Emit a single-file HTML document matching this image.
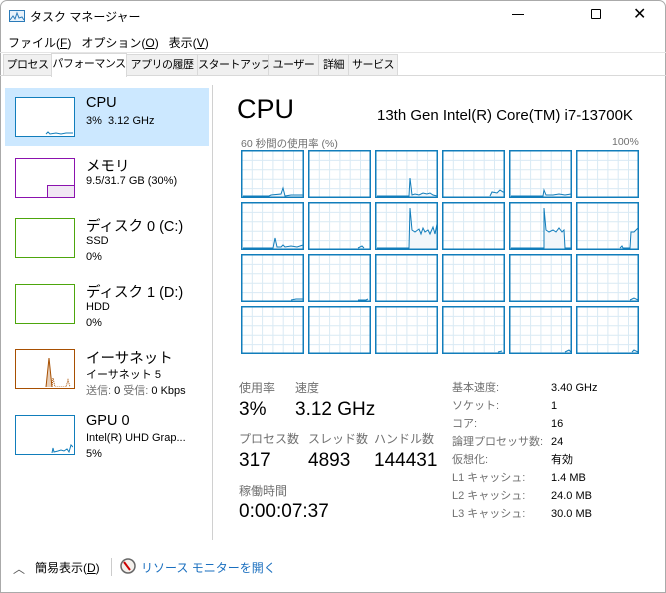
<!DOCTYPE html>
<html><head><meta charset="utf-8"><style>
*{margin:0;padding:0;box-sizing:border-box}
body{width:666px;height:593px;background:#fff;font-family:"Liberation Sans","Noto Sans CJK JP",sans-serif;color:#000;position:relative;overflow:hidden}
.a{position:absolute;white-space:nowrap}
.win{position:absolute;left:0;top:0;width:666px;height:593px;border:1px solid #aaa;border-radius:7px 7px 0 0;}
.tab{position:absolute;top:54px;height:22px;font-size:11px;line-height:21px;text-align:center;border:1px solid #d9d9d9;background:#f0f0f0;color:#000;white-space:nowrap;overflow:hidden;letter-spacing:-0.5px}
.th{position:absolute;left:15px;width:60px;height:40px;border:1.5px solid}
.t1{font-size:14.5px;left:86px}
.t2{font-size:11px;left:86px}
.g{color:#707070}
.lbl{font-size:12px;color:#707070}
.big{font-size:19px}
.r{font-size:11px}
</style></head><body>
<div class="win"></div>
<svg class="a" style="left:9px;top:10px" width="16" height="12"><rect x="0.5" y="0.5" width="15" height="11" fill="#e8f2fb" stroke="#2a7ab8"/><polyline points="1,10 4,6 6,9 8,3 10,8 13,7 15,10" fill="none" stroke="#2a7ab8"/></svg>
<div class="a" style="left:30px;top:8px;font-size:12px">タスク マネージャー</div>
<div class="a" style="left:512px;top:14px;width:12px;border-top:1px solid #000"></div>
<div class="a" style="left:591px;top:9px;width:10px;height:10px;border:1px solid #000;border-radius:1px"></div>
<div class="a" style="left:633px;top:4px;font-size:16px">✕</div>
<div class="a" style="left:8px;top:34px;font-size:12px">ファイル(<u>F</u>)&nbsp;&nbsp;&nbsp;オプション(<u>O</u>)&nbsp;&nbsp;&nbsp;表示(<u>V</u>)</div>
<div class="a" style="left:0;top:52px;width:666px;border-top:1px solid #e5e5e5"></div>
<div class="a" style="left:0;top:75px;width:666px;border-top:1px solid #d9d9d9"></div>
<div class="tab" style="left:3px;width:49px">プロセス</div>
<div class="tab" style="left:51px;width:76px;background:#fff;top:53px;height:24px;border-bottom:none">パフォーマンス</div>
<div class="tab" style="left:126px;width:72px">アプリの履歴</div>
<div class="tab" style="left:197px;width:72px">スタートアップ</div>
<div class="tab" style="left:268px;width:51px">ユーザー</div>
<div class="tab" style="left:318px;width:31px">詳細</div>
<div class="tab" style="left:348px;width:50px">サービス</div>

<div class="a" style="left:5px;top:88px;width:204px;height:58px;background:#cce8ff"></div>
<div class="a" style="left:212px;top:85px;height:455px;border-left:1px solid #d0d0d0"></div>

<div class="th" style="top:97px;border-color:#117dbb;background:#fff"><svg width="57" height="37" style="position:absolute;left:0;top:0"><polyline points="30,36 32,34 34,36 40,35 45,36 50,35 57,35" fill="none" stroke="#117dbb"/></svg></div>
<div class="a t1" style="top:95px">CPU</div><div class="a t2" style="top:115px">3%&nbsp; 3.12 GHz</div>

<div class="th" style="top:158px;border-color:#8b12ae"><div style="position:absolute;left:31px;top:26px;width:27px;height:12px;background:#f1e8f4;border-top:1.5px solid #8b12ae;border-left:1.5px solid #8b12ae"></div></div>
<div class="a t1" style="top:155px">メモリ</div><div class="a t2" style="top:175px">9.5/31.7 GB (30%)</div>

<div class="th" style="top:218px;border-color:#4da60c"></div>
<div class="a t1" style="top:215px">ディスク 0 (C:)</div><div class="a t2" style="top:235px">SSD</div><div class="a t2" style="top:251px">0%</div>

<div class="th" style="top:284px;border-color:#4da60c"></div>
<div class="a t1" style="top:281px">ディスク 1 (D:)</div><div class="a t2" style="top:301px">HDD</div><div class="a t2" style="top:317px">0%</div>

<div class="th" style="top:349px;border-color:#a74f01"><svg width="57" height="37" style="position:absolute;left:0;top:0"><polyline points="30,37 33,8 36,37" fill="#e8cfb8" stroke="#a74f01"/><polyline points="36,37 37,28 39,37 50,37 52,30 54,37" fill="none" stroke="#a74f01" stroke-dasharray="1,1"/></svg></div>
<div class="a t1" style="top:347px">イーサネット</div><div class="a t2" style="top:366px">イーサネット 5</div><div class="a t2" style="top:382px"><span class="g">送信:</span> 0 <span class="g">受信:</span> 0 Kbps</div>

<div class="th" style="top:415px;border-color:#117dbb"><svg width="57" height="37" style="position:absolute;left:0;top:0"><polyline points="36,37 37,32 38,36 42,35 45,34 48,35 51,33 53,36 55,29 57,31" fill="none" stroke="#117dbb"/></svg></div>
<div class="a t1" style="top:413px">GPU 0</div><div class="a t2" style="top:432px">Intel(R) UHD Grap...</div><div class="a t2" style="top:448px">5%</div>

<div class="a" style="left:237px;top:94px;font-size:27px">CPU</div>
<div class="a" style="left:377px;top:107px;font-size:15px">13th Gen Intel(R) Core(TM) i7-13700K</div>
<div class="a lbl" style="left:241px;top:136px;font-size:10.5px">60 秒間の使用率 (%)</div>
<div class="a lbl" style="left:612px;top:136px;font-size:10.5px">100%</div>
<div id="grid"></div>

<div class="a lbl" style="left:239px;top:379px">使用率</div>
<div class="a lbl" style="left:295px;top:379px">速度</div>
<div class="a big" style="left:239px;top:399px">3%</div>
<div class="a big" style="left:295px;top:399px">3.12 GHz</div>
<div class="a lbl" style="left:239px;top:430px">プロセス数</div>
<div class="a lbl" style="left:308px;top:430px">スレッド数</div>
<div class="a lbl" style="left:374px;top:430px">ハンドル数</div>
<div class="a big" style="left:239px;top:450px">317</div>
<div class="a big" style="left:308px;top:450px">4893</div>
<div class="a big" style="left:374px;top:450px">144431</div>
<div class="a lbl" style="left:239px;top:482px">稼働時間</div>
<div class="a big" style="left:239px;top:501px">0:00:07:37</div>

<div class="a r g" style="left:452px;top:379px;line-height:18px">基本速度:<br>ソケット:<br>コア:<br>論理プロセッサ数:<br>仮想化:<br>L1 キャッシュ:<br>L2 キャッシュ:<br>L3 キャッシュ:</div>
<div class="a r" style="left:551px;top:379px;line-height:18px">3.40 GHz<br>1<br>16<br>24<br>有効<br>1.4 MB<br>24.0 MB<br>30.0 MB</div>

<div class="a" style="left:13px;top:560px;font-size:12px;color:#555">︿</div>
<div class="a" style="left:35px;top:559px;font-size:12px">簡易表示(<u>D</u>)</div>
<div class="a" style="left:111px;top:558px;height:18px;border-left:1px solid #ccc"></div>
<svg class="a" style="left:120px;top:558px" width="16" height="16"><circle cx="8" cy="8" r="7" fill="#f4f0ec" stroke="#666" stroke-width="1.5"/><line x1="4" y1="4" x2="10" y2="12" stroke="#c00" stroke-width="2"/></svg>
<div class="a" style="left:141px;top:559px;font-size:12px;color:#1a6fbf">リソース モニターを開く</div>

<script>
var xs=[241,308,375,442,509,576],ys=[150,202,254,306];
var lines={
"0,0":"2,46 28,46 30,45 40,44 42,38 44,46 50,45 58,45 62,45",
"0,2":"2,46 34,46 35,28 37,45 40,44 44,45 48,43 52,44 55,43 58,45 62,46",
"0,3":"48,46 50,42 55,43 58,40 61,42 62,42",
"0,4":"2,46 34,46 35,40 37,45 44,45 50,44 56,45 62,44",
"1,0":"2,46 32,46 34,36 36,45 40,45 42,43 44,45 50,44 56,45 62,43",
"1,1":"50,46 54,44 56,46",
"1,2":"2,46 34,46 35,6 37,28 40,30 44,27 46,32 48,26 50,30 53,28 55,32 58,25 60,32 62,22",
"1,4":"2,46 35,46 35,6 37,28 40,30 44,28 47,30 50,26 53,30 55,28 56,46 62,46",
"1,5":"44,46 46,44 47,46 54,46 55,30 58,30 60,28 62,26",
"2,0":"50,46 55,45 62,45","2,1":"50,46 58,46 60,45","2,5":"54,46 58,44 62,46",
"3,3":"56,46 60,45","3,4":"56,46 60,44 62,46","3,5":"56,46 58,44 62,46"};
var h='';
for(var r=0;r<4;r++)for(var c=0;c<6;c++){
var s='<svg class="a" style="left:'+xs[c]+'px;top:'+ys[r]+'px" width="63" height="48">';
for(var i=1;i<6;i++)s+='<line x1="'+(i*10.3+1)+'" y1="1" x2="'+(i*10.3+1)+'" y2="47" stroke="#d9eaf4"/>';
for(var j=1;j<5;j++)s+='<line x1="1" y1="'+(j*9.4+1)+'" x2="62" y2="'+(j*9.4+1)+'" stroke="#d9eaf4"/>';
var p=lines[r+','+c];
if(p){s+='<polyline points="'+p+' 62,47 2,47" fill="#f1f6fa" stroke="none"/><polyline points="'+p+'" fill="none" stroke="#117dbb" stroke-width="1"/>';}
s+='<rect x="0.75" y="0.75" width="61.5" height="46.5" fill="none" stroke="#117dbb" stroke-width="1.5"/></svg>';
h+=s;}
document.getElementById('grid').innerHTML=h;
</script>
</body></html>
